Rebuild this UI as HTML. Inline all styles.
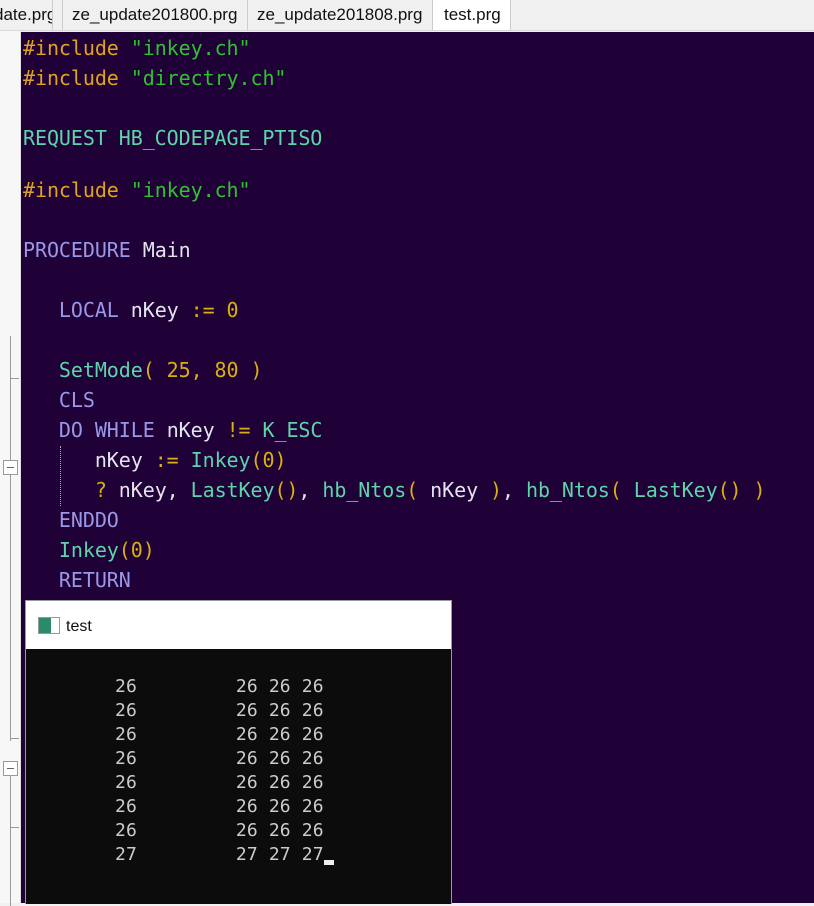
<!DOCTYPE html>
<html><head><meta charset="utf-8"><style>
body{margin:0;width:814px;height:903px;overflow:hidden;background:#f0f0f0;position:relative;font-family:"Liberation Sans",sans-serif}
.tabs{position:absolute;left:0;top:0;width:814px;height:30px;background:#f0f0f0;border-bottom:1px solid #d8d8d8}
.tab{position:absolute;top:0;height:30px;line-height:30px;font-size:17px;color:#111;border-right:1px solid #ccc;white-space:nowrap}
.ed{position:absolute;left:21px;top:32px;width:793px;height:871px;background:#1f0037}
.gut{position:absolute;left:0;top:31px;width:20px;height:872px;background:#f7f7f7;border-right:1px solid #e0e0e0}
.l{position:absolute;left:23px;font-family:"DejaVu Sans Mono",monospace;font-size:20px;letter-spacing:-0.07px;white-space:pre;line-height:30px}
.y{color:#e0a418}.g{color:#2fc22f}.t{color:#5ed4a8}.p{color:#9c98e8}.w{color:#e4e4ee}.n{color:#d8b010}
.con{position:absolute;left:25px;top:600px;width:425px;height:303px;background:#0c0c0c;border:1px solid #999;border-bottom:none}
.tb{position:absolute;left:0;top:0;width:425px;height:48px;background:#fff}
.c{position:absolute;font-family:"DejaVu Sans Mono",monospace;font-size:18px;letter-spacing:0.15px;color:#cccccc;white-space:pre;line-height:24px}
</style></head><body>
<div class="tabs">
<div class="tab" style="left:0;width:52px;padding-left:0;overflow:hidden;direction:rtl;text-align:left"><span style="position:absolute;left:-6px">date.prg</span></div>
<div class="tab" style="left:62px;width:186px;padding-left:9px;box-sizing:border-box;border-left:1px solid #ccc">ze_update201800.prg</div>
<div class="tab" style="left:248px;width:185px;padding-left:9px;box-sizing:border-box">ze_update201808.prg</div>
<div class="tab" style="left:433px;width:78px;padding-left:11px;box-sizing:border-box;background:#fff">test.prg</div>
</div>
<div class="gut">
<div style="position:absolute;left:10px;top:305px;width:1px;height:405px;background:#999"></div>
<div style="position:absolute;left:10px;top:347px;width:9px;height:1px;background:#999"></div>
<div style="position:absolute;left:3px;top:429px;width:13px;height:13px;border:1px solid #999;background:#fff"><div style="position:absolute;left:3px;top:6px;width:7px;height:1px;background:#666"></div></div>
<div style="position:absolute;left:10px;top:707px;width:9px;height:1px;background:#999"></div>
<div style="position:absolute;left:3px;top:730px;width:13px;height:13px;border:1px solid #999;background:#fff"><div style="position:absolute;left:3px;top:6px;width:7px;height:1px;background:#666"></div></div>
<div style="position:absolute;left:10px;top:745px;width:1px;height:130px;background:#999"></div>
<div style="position:absolute;left:10px;top:796px;width:9px;height:1px;background:#999"></div>
</div>
<div class="ed"></div>
<div style="position:absolute;left:60px;top:446px;width:0;height:60px;border-left:1px dotted #aaa"></div>
<div class="l" style="top:33px"><span class="y">#include</span> <span class="g">"inkey.ch"</span></div>
<div class="l" style="top:63px"><span class="y">#include</span> <span class="g">"directry.ch"</span></div>
<div class="l" style="top:123px"><span class="t">REQUEST HB_CODEPAGE_PTISO</span></div>
<div class="l" style="top:175px"><span class="y">#include</span> <span class="g">"inkey.ch"</span></div>
<div class="l" style="top:235px"><span class="p">PROCEDURE</span> <span class="w">Main</span></div>
<div class="l" style="top:295px">   <span class="p">LOCAL</span> <span class="w">nKey</span> <span class="n">:= 0</span></div>
<div class="l" style="top:355px">   <span class="t">SetMode</span><span class="n">( 25, 80 )</span></div>
<div class="l" style="top:385px">   <span class="p">CLS</span></div>
<div class="l" style="top:415px">   <span class="p">DO WHILE</span> <span class="w">nKey</span> <span class="n">!=</span> <span class="t">K_ESC</span></div>
<div class="l" style="top:445px">      <span class="w">nKey</span> <span class="n">:=</span> <span class="t">Inkey</span><span class="n">(0)</span></div>
<div class="l" style="top:475px">      <span class="n">?</span> <span class="w">nKey,</span> <span class="t">LastKey</span><span class="n">()</span><span class="w">,</span> <span class="t">hb_Ntos</span><span class="n">(</span> <span class="w">nKey</span> <span class="n">)</span><span class="w">,</span> <span class="t">hb_Ntos</span><span class="n">(</span> <span class="t">LastKey</span><span class="n">() )</span></div>
<div class="l" style="top:505px">   <span class="p">ENDDO</span></div>
<div class="l" style="top:535px">   <span class="t">Inkey</span><span class="n">(0)</span></div>
<div class="l" style="top:565px">   <span class="p">RETURN</span></div>
<div class="con">
<div class="tb">
<div style="position:absolute;left:12px;top:16px;width:20px;height:15px;border:1px solid #999;background:linear-gradient(90deg,#2a8a6a 0 12px,#fff 12px)"></div>
<div style="position:absolute;left:40px;top:17px;font-size:16px;color:#111">test</div>
</div>
<div class="c" style="left:89px;top:74px">26         26 26 26
26         26 26 26
26         26 26 26
26         26 26 26
26         26 26 26
26         26 26 26
26         26 26 26
27         27 27 27</div>
<div style="position:absolute;left:298px;top:259px;width:10px;height:5px;background:#eee"></div>
</div>
</body></html>
